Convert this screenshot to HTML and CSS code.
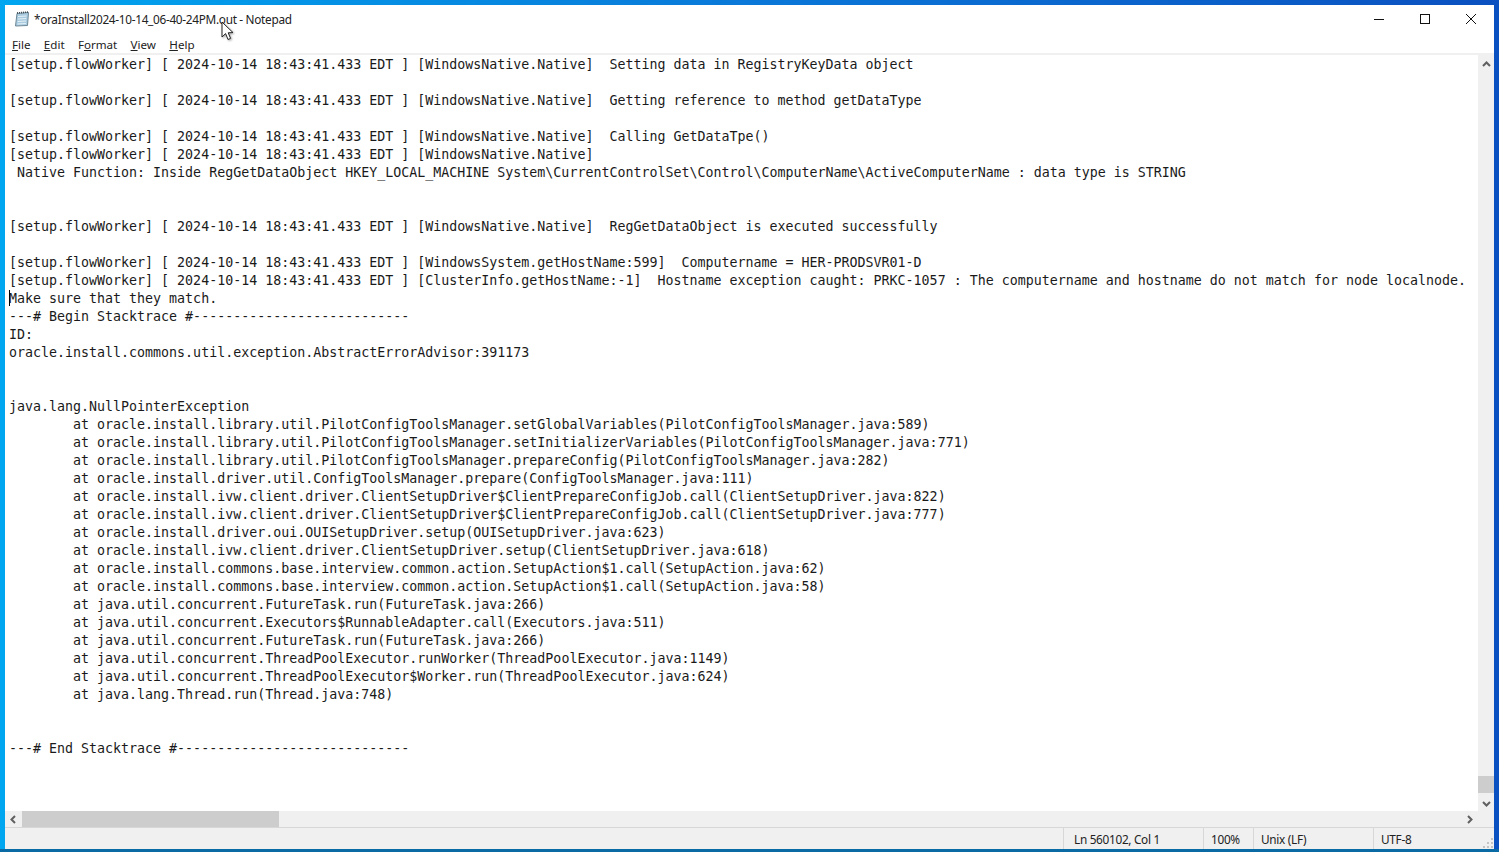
FILE: index.html
```html
<!DOCTYPE html>
<html lang="en">
<head>
<meta charset="utf-8">
<title>Notepad</title>
<link rel="stylesheet" href="styles.css">
</head>
<body>
<div class="window">
  <header class="titlebar">
    <svg class="app-icon" width="16" height="16" viewBox="0 0 16 16">
      <path d="M3 2.5 L14.5 1.5 L13.5 14.5 L1.5 15 Z" fill="#a9cbe0" stroke="#6d8796" stroke-width="1"/>
      <path d="M4 5.5 L12.5 5 M3.8 8 L12.3 7.5 M3.6 10.5 L12.1 10 M3.4 13 L11.9 12.5" stroke="#e6f1f7" stroke-width="1"/>
      <path d="M3 2 L14 1" stroke="#3d4a52" stroke-width="1.6" stroke-dasharray="1 1"/>
    </svg>
    <span class="title">*oraInstall2024-10-14_06-40-24PM.out - Notepad</span>
    <div class="controls">
      <svg class="ctl" width="46" height="28" viewBox="0 0 46 28"><path d="M18 14.5 H28" stroke="#111" stroke-width="1"/></svg>
      <svg class="ctl" width="46" height="28" viewBox="0 0 46 28"><rect x="18.5" y="9.5" width="9" height="9" fill="none" stroke="#111" stroke-width="1"/></svg>
      <svg class="ctl" width="46" height="28" viewBox="0 0 46 28"><path d="M18 9 L28 19 M28 9 L18 19" stroke="#111" stroke-width="1"/></svg>
    </div>
  </header>
  <nav class="menubar">
    <span class="menu"><u>F</u>ile</span>
    <span class="menu"><u>E</u>dit</span>
    <span class="menu">F<u>o</u>rmat</span>
    <span class="menu"><u>V</u>iew</span>
    <span class="menu"><u>H</u>elp</span>
  </nav>
  <div class="client">
    <main class="editor"><pre class="text">[setup.flowWorker] [ 2024-10-14 18:43:41.433 EDT ] [WindowsNative.Native]  Setting data in RegistryKeyData object

[setup.flowWorker] [ 2024-10-14 18:43:41.433 EDT ] [WindowsNative.Native]  Getting reference to method getDataType

[setup.flowWorker] [ 2024-10-14 18:43:41.433 EDT ] [WindowsNative.Native]  Calling GetDataTpe()
[setup.flowWorker] [ 2024-10-14 18:43:41.433 EDT ] [WindowsNative.Native]
 Native Function: Inside RegGetDataObject HKEY_LOCAL_MACHINE System\CurrentControlSet\Control\ComputerName\ActiveComputerName : data type is STRING


[setup.flowWorker] [ 2024-10-14 18:43:41.433 EDT ] [WindowsNative.Native]  RegGetDataObject is executed successfully

[setup.flowWorker] [ 2024-10-14 18:43:41.433 EDT ] [WindowsSystem.getHostName:599]  Computername = HER-PRODSVR01-D
[setup.flowWorker] [ 2024-10-14 18:43:41.433 EDT ] [ClusterInfo.getHostName:-1]  Hostname exception caught: PRKC-1057 : The computername and hostname do not match for node localnode.
Make sure that they match.
---# Begin Stacktrace #---------------------------
ID:
oracle.install.commons.util.exception.AbstractErrorAdvisor:391173


java.lang.NullPointerException
	at oracle.install.library.util.PilotConfigToolsManager.setGlobalVariables(PilotConfigToolsManager.java:589)
	at oracle.install.library.util.PilotConfigToolsManager.setInitializerVariables(PilotConfigToolsManager.java:771)
	at oracle.install.library.util.PilotConfigToolsManager.prepareConfig(PilotConfigToolsManager.java:282)
	at oracle.install.driver.util.ConfigToolsManager.prepare(ConfigToolsManager.java:111)
	at oracle.install.ivw.client.driver.ClientSetupDriver$ClientPrepareConfigJob.call(ClientSetupDriver.java:822)
	at oracle.install.ivw.client.driver.ClientSetupDriver$ClientPrepareConfigJob.call(ClientSetupDriver.java:777)
	at oracle.install.driver.oui.OUISetupDriver.setup(OUISetupDriver.java:623)
	at oracle.install.ivw.client.driver.ClientSetupDriver.setup(ClientSetupDriver.java:618)
	at oracle.install.commons.base.interview.common.action.SetupAction$1.call(SetupAction.java:62)
	at oracle.install.commons.base.interview.common.action.SetupAction$1.call(SetupAction.java:58)
	at java.util.concurrent.FutureTask.run(FutureTask.java:266)
	at java.util.concurrent.Executors$RunnableAdapter.call(Executors.java:511)
	at java.util.concurrent.FutureTask.run(FutureTask.java:266)
	at java.util.concurrent.ThreadPoolExecutor.runWorker(ThreadPoolExecutor.java:1149)
	at java.util.concurrent.ThreadPoolExecutor$Worker.run(ThreadPoolExecutor.java:624)
	at java.lang.Thread.run(Thread.java:748)


---# End Stacktrace #-----------------------------</pre><span class="caret"></span></main>
    <aside class="vscroll">
      <svg width="9" height="6" viewBox="0 0 9 6"><path d="M1 5 L4.5 1.5 L8 5" fill="none" stroke="#606060" stroke-width="2"/></svg>
      <div class="vtrack"><div class="vthumb"></div></div>
      <svg width="9" height="6" viewBox="0 0 9 6"><path d="M1 1 L4.5 4.5 L8 1" fill="none" stroke="#606060" stroke-width="2"/></svg>
    </aside>
  </div>
  <div class="hscroll">
    <svg class="harrow" width="6" height="9" viewBox="0 0 6 9"><path d="M5 1 L1.5 4.5 L5 8" fill="none" stroke="#606060" stroke-width="2"/></svg>
    <div class="htrack"><div class="hthumb"></div></div>
    <svg class="harrow" width="6" height="9" viewBox="0 0 6 9"><path d="M1 1 L4.5 4.5 L1 8" fill="none" stroke="#606060" stroke-width="2"/></svg>
    <div class="corner"></div>
  </div>
  <footer class="statusbar">
    <div class="cell cell-empty"></div>
    <div class="cell cell-pos">Ln 560102, Col 1</div>
    <div class="cell cell-zoom">100%</div>
    <div class="cell cell-eol">Unix (LF)</div>
    <div class="cell cell-enc">UTF-8</div>
    <svg class="grip" width="11" height="11" viewBox="0 0 11 11"><path d="M9 1h2v2H9zM5 5h2v2H5zM9 5h2v2H9zM1 9h2v2H1zM5 9h2v2H5zM9 9h2v2H9z" fill="#c4c4c4"/></svg>
  </footer>
</div>
<svg class="pointer" width="14" height="20" viewBox="0 0 14 20">
  <path d="M1 1 L1 16 L4.6 12.6 L7 18.5 L9.6 17.4 L7.2 11.8 L12 11.6 Z" fill="#fff" stroke="#222" stroke-width="1"/>
</svg>
</body>
</html>
```
FILE: styles.css
```css
* { box-sizing: border-box; }
html, body { margin: 0; height: 100%; overflow: hidden; }
body {
  background:
    linear-gradient(to top, #0a6aa4 3px, transparent 3px),
    linear-gradient(to right, #00a6f0 0%, #0a78d8 50%, #0b50c0 100%);
  padding: 5px 5px 3px 5px;
  position: relative;
}
.window {
  height: 100%;
  background: #fff;
  display: flex;
  flex-direction: column;
  font-family: "Noto Sans", "Open Sans", sans-serif;
  color: #111;
}
.titlebar {
  height: 29px;
  display: flex;
  align-items: center;
  padding-left: 9px;
  padding-bottom: 2px;
  flex: none;
}
.app-icon { flex: none; }
.title { margin-left: 4px; font-size: 11.8px; letter-spacing: -0.3px; color: #222; }
.controls { margin-left: auto; display: flex; align-items: center; }
.ctl { display: block; }
.menubar {
  height: 21px;
  flex: none;
  display: flex;
  align-items: center;
  padding-left: 7px;
  padding-top: 1px;
  gap: 13.3px;
  font-size: 11.6px;
  color: #222;
  border-bottom: 2px solid #f0f0f0;
}
.client { flex: 1; display: flex; min-height: 0; }
.editor { flex: 1; min-width: 0; overflow: hidden; position: relative; padding: 1px 0 0 4px; }
.text {
  margin: 0;
  font-family: "DejaVu Sans Mono", "Liberation Mono", monospace;
  font-size: 13.3px;
  line-height: 18px;
  tab-size: 8;
  color: #1a1a1a;
  white-space: pre;
}
.caret { position: absolute; left: 4px; top: 235px; width: 1px; height: 16px; background: #000; }
.vscroll {
  width: 16px;
  flex: none;
  background: #f0f0f0;
  display: flex;
  flex-direction: column;
  align-items: center;
  padding: 6px 0 4px;
}
.vscroll svg { flex: none; display: block; }
.vtrack { flex: 1; align-self: stretch; display: flex; flex-direction: column; justify-content: flex-end; padding-bottom: 8px; }
.vthumb { height: 17px; background: #cdcdcd; }
.hscroll {
  height: 16px;
  flex: none;
  background: #f0f0f0;
  display: flex;
  align-items: center;
  padding-left: 5px;
}
.harrow { flex: none; display: block; }
.htrack { flex: 1; align-self: stretch; padding-left: 6px; padding-right: 5px; }
.hthumb { width: 257px; height: 100%; background: #cdcdcd; }
.corner { width: 16px; flex: none; margin-left: 5px; }
.statusbar {
  height: 22px;
  flex: none;
  display: flex;
  align-items: center;
  background: #f0f0f0;
  border-top: 1px solid #d7d7d7;
  font-size: 11.8px;
  letter-spacing: -0.3px;
  color: #222;
  position: relative;
}
.cell { height: 100%; display: flex; align-items: center; padding-top: 1px; border-left: 1px solid #d7d7d7; flex: none; }
.cell-empty { width: 1058px; border-left: 0; }
.cell-pos { width: 140px; padding-left: 10px; }
.cell-zoom { width: 50px; padding-left: 7px; }
.cell-eol { width: 120px; padding-left: 7px; }
.cell-enc { width: 121px; padding-left: 7px; }
.grip { position: absolute; right: 1px; bottom: 1px; }
.pointer { position: absolute; left: 221px; top: 21px; filter: drop-shadow(1px 1px 1px rgba(0,0,0,.35)); }
```
